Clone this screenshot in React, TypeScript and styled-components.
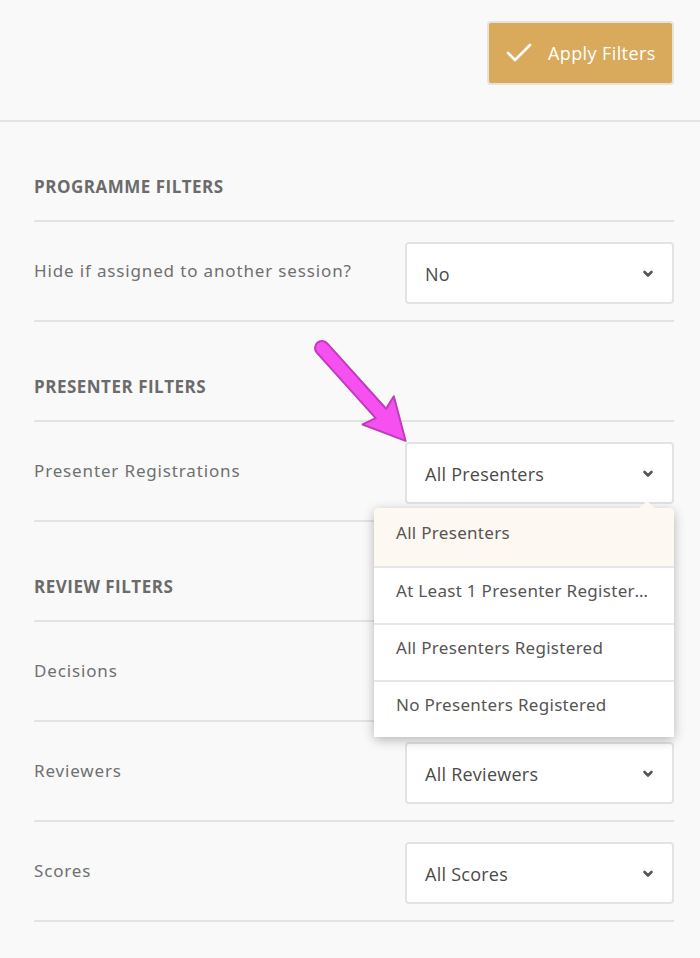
import React from 'react';
import styled, { createGlobalStyle } from 'styled-components';

const GlobalStyle = createGlobalStyle`
    body {
        margin: 0;
        background: #f9f9f9;
        font-family: 'Open Sans', 'Noto Sans', sans-serif;
    }
`;

const Page = styled.div`
    position: relative;
    width: 700px;
    min-height: 958px;
    background: #f9f9f9;
`;

const Header = styled.div`
    height: 122px;
    display: flex;
    align-items: flex-start;
    justify-content: flex-end;
    padding: 21px 26px 0 0;
    box-sizing: border-box;
    border-bottom: 2px solid #e3e3e3;
`;

const ApplyButton = styled.button`
    display: flex;
    align-items: center;
    gap: 16px;
    height: 64px;
    width: 187px;
    padding: 0 0 0 17px;
    box-sizing: border-box;
    background: #d9aa5c;
    border: 2px solid #e6e2dc;
    border-radius: 4px;
    color: #fff;
    font-family: 'Open Sans', sans-serif;
    font-size: 18px;
    letter-spacing: 0.4px;
    font-weight: 500;
    cursor: pointer;
`;

const Content = styled.div`
    padding: 0 26px 0 34px;
`;

const SectionTitle = styled.div`
    height: 100px;
    box-sizing: border-box;
    display: flex;
    align-items: flex-end;
    padding-bottom: 22px;
    border-bottom: 2px solid #e3e3e3;
    font-family: 'Open Sans', sans-serif;
    font-weight: 700;
    font-size: 17px;
    letter-spacing: 0.5px;
    color: #6b6b6b;
`;

const Row = styled.div`
    height: 100px;
    box-sizing: border-box;
    display: flex;
    align-items: flex-start;
    justify-content: space-between;
    padding-top: 20px;
    border-bottom: 2px solid #e3e3e3;
`;

const Label = styled.div`
    margin-top: 17px;
    font-family: 'Noto Sans', sans-serif;
    font-size: 17px;
    letter-spacing: 0.85px;
    color: #707070;
    font-weight: 400;
`;

const SelectWrap = styled.div`
    position: relative;
`;

const SelectBox = styled.div`
    width: 269px;
    height: 62px;
    box-sizing: border-box;
    display: flex;
    align-items: center;
    justify-content: space-between;
    padding: 2px 18px 0 18px;
    background: #fff;
    border: 2px solid #e3e3e3;
    border-radius: 4px;
    font-family: 'Open Sans', sans-serif;
    font-size: 18px;
    letter-spacing: 0.25px;
    color: #4a4a4a;
`;

const Menu = styled.div`
    position: absolute;
    top: 66px;
    right: 0;
    width: 300px;
    background: #fff;
    border-radius: 5px;
    box-shadow: 0 3px 12px rgba(0, 0, 0, 0.28);
    z-index: 5;

    &::before {
        content: '';
        position: absolute;
        top: -7px;
        right: 19px;
        border-left: 8px solid transparent;
        border-right: 8px solid transparent;
        border-bottom: 7px solid #fdf8f1;
    }
`;

const MenuItem = styled.div<{ $active?: boolean }>`
    height: 57px;
    box-sizing: border-box;
    line-height: 46px;
    padding: 0 22px;
    font-family: 'Noto Sans', sans-serif;
    font-size: 17px;
    letter-spacing: 0.3px;
    color: #555;
    background: ${(p) => (p.$active ? '#fdf8f1' : '#fff')};
    border-top: ${(p) => (p.$active ? 'none' : '2px solid #e6e6e6')};
    white-space: nowrap;
    overflow: hidden;
    text-overflow: ellipsis;

    &:first-child {
        border-radius: 5px 5px 0 0;
        height: 58px;
        line-height: 50px;
    }
`;

const ArrowOverlay = styled.svg`
    position: absolute;
    left: 300px;
    top: 330px;
    pointer-events: none;
    z-index: 6;
`;

const Chevron = () => (
    <svg width="12" height="8" viewBox="0 0 12 8">
        <path d="M2.5 2 L6 5.5 L9.5 2" fill="none" stroke="#555" strokeWidth="2.6" strokeLinecap="round" strokeLinejoin="round" />
    </svg>
);

const Check = () => (
    <svg width="26" height="20" viewBox="0 0 26 20">
        <path d="M2 10 L9 17 L24 2" fill="none" stroke="#fff" strokeWidth="2.6" strokeLinecap="round" strokeLinejoin="round" />
    </svg>
);

type Filter = { label: string; value?: string; open?: boolean };

const sections: { title: string; rows: Filter[] }[] = [
    { title: 'PROGRAMME FILTERS', rows: [{ label: 'Hide if assigned to another session?', value: 'No' }] },
    { title: 'PRESENTER FILTERS', rows: [{ label: 'Presenter Registrations', value: 'All Presenters', open: true }] },
    {
        title: 'REVIEW FILTERS',
        rows: [
            { label: 'Decisions' },
            { label: 'Reviewers', value: 'All Reviewers' },
            { label: 'Scores', value: 'All Scores' },
        ],
    },
];

const options = ['All Presenters', 'At Least 1 Presenter Registered', 'All Presenters Registered', 'No Presenters Registered'];

export default function App() {
    return (
        <Page>
            <GlobalStyle />
            <Header>
                <ApplyButton>
                    <Check />
                    Apply Filters
                </ApplyButton>
            </Header>
            <Content>
                {sections.map((s) => (
                    <React.Fragment key={s.title}>
                        <SectionTitle>{s.title}</SectionTitle>
                        {s.rows.map((r) => (
                            <Row key={r.label}>
                                <Label>{r.label}</Label>
                                <SelectWrap>
                                    <SelectBox>
                                        <span>{r.value}</span>
                                        <Chevron />
                                    </SelectBox>
                                    {r.open && (
                                        <Menu>
                                            {options.map((o, i) => (
                                                <MenuItem key={o} $active={i === 0}>
                                                    {o}
                                                </MenuItem>
                                            ))}
                                        </Menu>
                                    )}
                                </SelectWrap>
                            </Row>
                        ))}
                    </React.Fragment>
                ))}
            </Content>
            <ArrowOverlay width="130" height="130" viewBox="0 0 130 130">
                <g transform="translate(22 18) rotate(48)">
                    <path
                        d="M0 -7 L88 -7 L84 -21 L125 0 L84 21 L88 7 L0 7 A7 7 0 0 1 0 -7 Z"
                        fill="#f750f0"
                        stroke="#c03bbd"
                        strokeWidth="2"
                        strokeLinejoin="round"
                    />
                </g>
            </ArrowOverlay>
        </Page>
    );
}
